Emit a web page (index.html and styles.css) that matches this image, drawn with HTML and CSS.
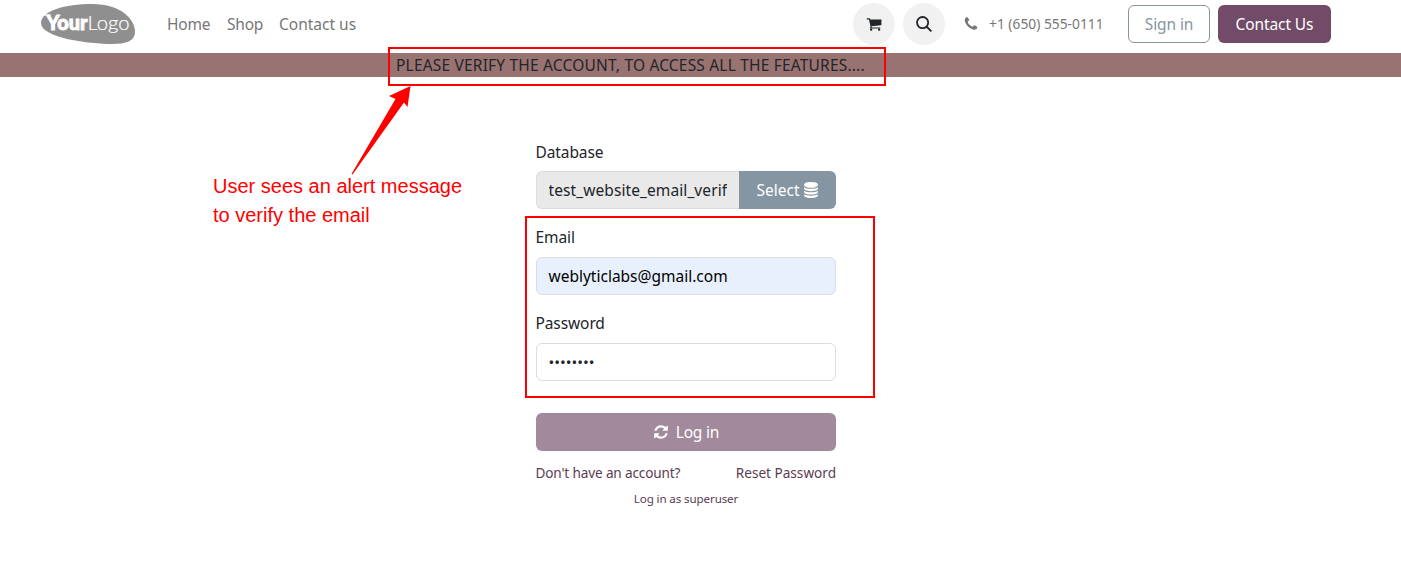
FILE: index.html
```html
<!DOCTYPE html>
<html lang="en">
<head>
<meta charset="utf-8">
<title>Login</title>
<link rel="stylesheet" href="styles.css">
</head>
<body>
<header class="header">
  <svg class="logo" viewBox="0 0 96 42" width="96" height="42">
    <path d="M1 20C1 8 25 1 52 1C82 1 95 17 95 29C95 38 86 41 72 41C50 41 1 35 1 20Z" fill="#8f8f8f"/>
    <path d="M4 12H11" stroke="#fff" stroke-width="1"/>
    <text class="logo-bold" x="6.500" y="26.500" textLength="41" lengthAdjust="spacingAndGlyphs">Your</text>
    <text class="logo-light" x="47.500" y="26.500" textLength="42" lengthAdjust="spacingAndGlyphs">Logo</text>
  </svg>
  <nav class="nav">
    <a class="t-home">Home</a><a class="t-shop">Shop</a><a class="t-contact">Contact us</a>
  </nav>
  <div class="tools">
    <span class="round"><svg width="16" height="16" viewBox="0 0 1792 1792"><path fill="currentColor" d="M704 1536q0 52-38 90t-90 38-90-38-38-90 38-90 90-38 90 38 38 90zm896 0q0 52-38 90t-90 38-90-38-38-90 38-90 90-38 90 38 38 90zm128-1088v512q0 24-16.5 42.5t-40.5 21.5l-1044 122q13 60 13 70 0 16-24 64h920q26 0 45 19t19 45-19 45-45 19h-1024q-26 0-45-19t-19-45q0-11 8-31.5t16-36 21.5-40 15.5-29.5l-177-823h-204q-26 0-45-19t-19-45 19-45 45-19h256q16 0 28.5 6.5t19.5 15.5 13 24.5 8 26 5.5 29.5 4.5 26h1201q26 0 45 19t19 45z"/></svg></span>
    <span class="round"><svg width="16" height="16" viewBox="0 0 16 16" fill="none" stroke="currentColor" stroke-width="1.800"><circle cx="6.600" cy="6.600" r="5.600"/><path d="M10.500 10.500L15.400 15.400"/></svg></span>
    <span class="phone"><svg width="16" height="16" viewBox="0 0 1792 1792"><path fill="currentColor" d="M1600 1240q0 27-10 70.5t-21 68.5q-21 50-122 106-94 51-186 51-27 0-53-3.5t-57.5-12.5-47-14.5-55.5-20.5-49-18q-98-35-175-83-127-79-264-216t-216-264q-48-77-83-175-3-9-18-49t-20.5-55.5-14.5-47-12.5-57.5-3.5-53q0-92 51-186 56-101 106-122 25-11 68.5-21t70.5-10q14 0 21 3 18 6 53 76 11 19 30 54t35 63.5 31 53.5q3 4 17.5 25t21.5 35.5 7 28.5q0 20-28.5 50t-62 55-62 53-28.5 46q0 9 5 22.5t8.5 20.5 14 24 11.5 19q76 137 174 235t235 174q2 1 19 11.5t24 14 20.5 8.5 22.5 5q18 0 46-28.5t53-62 55-62 50-28.5q14 0 28.5 7t35.5 21.5 25 17.5q25 15 53.5 31t63.5 35 54 30q70 35 76 53 3 7 3 21z"/></svg><span class="t-phone">+1 (650) 555-0111</span></span>
    <a class="btn btn-outline"><span class="t-signin">Sign in</span></a>
    <a class="btn btn-primary"><span class="t-cta">Contact Us</span></a>
  </div>
</header>
<div class="alert"><span class="t-alert">PLEASE VERIFY THE ACCOUNT, TO ACCESS ALL THE FEATURES....</span></div>
<main class="login">
  <label class="label t-db">Database</label>
  <div class="group">
    <div class="field readonly"><span class="clip">test_website_email_verif</span></div>
    <a class="select"><span class="t-select">Select</span><svg width="16" height="16" viewBox="0 0 1792 1792"><path fill="currentColor" d="M896 768q237 0 443-43t325-127v170q0 69-103 128t-280 93.5-385 34.5-385-34.5-280-93.5-103-128v-170q119 84 325 127t443 43zm0 768q237 0 443-43t325-127v170q0 69-103 128t-280 93.5-385 34.5-385-34.5-280-93.5-103-128v-170q119 84 325 127t443 43zm0-384q237 0 443-43t325-127v170q0 69-103 128t-280 93.5-385 34.5-385-34.5-280-93.5-103-128v-170q119 84 325 127t443 43zm0-1152q208 0 385 34.5t280 93.5 103 128v128q0 69-103 128t-280 93.5-385 34.5-385-34.5-280-93.5-103-128v-128q0-69 103-128t280-93.5 385-34.5z"/></svg></a>
  </div>
  <label class="label label-next">Email</label>
  <div class="field filled"><span class="t-mail">weblyticlabs@gmail.com</span></div>
  <label class="label label-next t-pass">Password</label>
  <div class="field"><span class="dots">••••••••</span></div>
  <div class="submit"><svg width="16" height="16" viewBox="0 0 1792 1792"><path fill="currentColor" d="M1639 1056q0 5-1 7-64 268-268 434.5t-478 166.5q-146 0-282.5-55t-243.5-157l-129 129q-19 19-45 19t-45-19-19-45v-448q0-26 19-45t45-19h448q26 0 45 19t19 45-19 45l-137 137q71 66 161 102t187 36q134 0 250-65t186-179q11-17 53-117 8-23 30-23h192q13 0 22.5 9.5t9.5 22.5zm25-800v448q0 26-19 45t-45 19h-448q-26 0-45-19t-19-45 19-45l138-138q-148-137-349-137-134 0-250 65t-186 179q-11 17-53 117-8 23-30 23h-199q-13 0-22.5-9.5t-9.5-22.5v-7q65-268 270-434.5t480-166.5q146 0 284 55.5t245 156.5l130-129q19-19 45-19t45 19 19 45z"/></svg><span class="t-login">Log in</span></div>
  <div class="links"><a class="t-dont">Don't have an account?</a><a class="t-reset">Reset Password</a></div>
  <div class="super"><a class="t-super">Log in as superuser</a></div>
</main>
<div class="mark mark-alert"></div>
<div class="mark mark-form"></div>
<svg class="arrow" width="60" height="92" viewBox="0 0 60 92"><path d="M60.500 2L57.500 23L54 18.500L2.500 90.500L1.500 90L45.500 15L39 12Z" fill="#f00"/></svg>
<p class="note">User sees an alert message<br>to verify the email</p>
</body>
</html>
```
FILE: styles.css
```css
* { box-sizing: border-box; }
body { margin: 0; height: 561px; position: relative; overflow: hidden; background: #fff; color: #212529; font: 15.5px/24px "Noto Sans", sans-serif; }
svg { display: block; flex: none; }
span, a { white-space: nowrap; }
.header { height: 53px; display: flex; align-items: flex-start; padding: 3px 70px 0 40px; }
.logo-bold, .logo-light { fill: #fff; font-family: Lato, sans-serif; font-size: 20px; }
.logo-bold { font-weight: 900; stroke: #fff; stroke-width: .9px; }
.logo-light { font-weight: 300; stroke: #fff; stroke-width: .2px; }
.nav { display: flex; padding: 9px 0 0 31px; color: #777; }
.nav a { width: 60px; }
.nav .t-home { letter-spacing: -.2px; }
.nav .t-shop { width: 52px; letter-spacing: -.2px; }
.tools { display: flex; align-items: flex-start; margin-left: auto; }
.round { width: 42px; height: 42px; margin-right: 8px; border-radius: 50%; background: #f1f1f1; display: flex; align-items: center; justify-content: center; }
.phone { display: flex; align-items: center; height: 42px; width: 175px; padding-left: 10px; gap: 10px; color: #777; font-size: 13.8px; }
.btn { height: 38px; margin-top: 2px; border-radius: 6px; display: flex; align-items: center; justify-content: center; }
.btn-outline { width: 82px; margin-right: 8px; border: 1px solid #8595a2; color: #8595a2; }
.btn-primary { width: 113px; background: #714b67; color: #fff; }
.t-signin, .t-cta { letter-spacing: -.1px; }
.alert { height: 24px; padding-left: 396px; background: #997371; }
.t-alert { letter-spacing: .19px; }
.login { width: 300px; margin-left: 536px; padding-top: 63px; }
.label { display: block; height: 31px; letter-spacing: -.1px; text-indent: -.5px; }
.label-next { height: 32px; margin-top: 16px; }
.group { display: flex; }
.field { height: 38px; padding: 6px 11.5px; border: 1px solid #dbdde0; border-radius: 6px; display: flex; align-items: center; }
.readonly { width: 203px; background: #e9e9e9; border-right: 0; border-radius: 6px 0 0 6px; }
.clip { width: 178.5px; overflow: hidden; letter-spacing: .09px; }
.filled { background: #e8f0fe; color: #000; }
.select { width: 97px; background: #8595a2; color: #fff; border-radius: 0 6px 6px 0; display: flex; align-items: center; justify-content: center; gap: 3px; }
.dots { font-size: 15.3px; }
.submit { height: 38px; margin-top: 32px; border-radius: 6px; background: #a2899b; color: #fff; display: flex; align-items: center; justify-content: center; gap: 7px; }
.t-login { letter-spacing: -.2px; }
.links { display: flex; justify-content: space-between; margin: 10px 0 0 -.5px; font-size: 13.6px; color: #5b3c53; }
.t-dont { letter-spacing: -.15px; }
.super { text-align: center; margin-top: 2px; font-size: 11.6px; letter-spacing: -.12px; color: #5b3c53; }
.mark { position: absolute; border: 2px solid #f00; }
.mark-alert { left: 388px; top: 47px; width: 498px; height: 39px; }
.mark-form { left: 525px; top: 216px; width: 350px; height: 182px; }
.arrow { position: absolute; left: 350px; top: 84px; overflow: visible; }
.note { position: absolute; left: 213px; top: 172px; margin: 0; color: #f00; font: 20px/29px "Liberation Sans", sans-serif; }
```
